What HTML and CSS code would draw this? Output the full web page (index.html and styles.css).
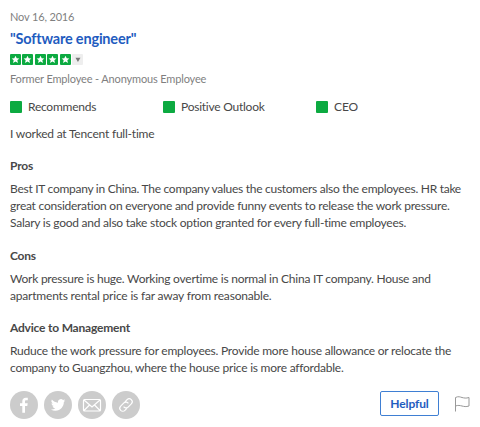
FILE: index.html
```html
<!DOCTYPE html>
<html lang="en">
<head>
<meta charset="utf-8">
<title>Software engineer review</title>
<link rel="stylesheet" href="styles.css">
</head>
<body>
<svg class="defs" aria-hidden="true"><symbol id="star" viewBox="0 0 12 12"><path fill="#fff" d="M6 1.8 7.3 4.6 10.2 4.9 8 6.9 8.7 9.8 6 8.3 3.3 9.8 4 6.9 1.8 4.9 4.7 4.6Z"/></symbol></svg>
<article class="review">
  <time class="date">Nov 16, 2016</time>
  <h2 class="title">"Software engineer"</h2>
  <div class="rating">
    <svg class="star"><use href="#star"/></svg>
    <svg class="star"><use href="#star"/></svg>
    <svg class="star"><use href="#star"/></svg>
    <svg class="star"><use href="#star"/></svg>
    <svg class="star"><use href="#star"/></svg>
    <svg class="more" viewBox="0 0 12 12"><path fill="#777" d="M3.800 4h5.400L6.500 8.600Z"/></svg>
  </div>
  <p class="author">Former Employee - Anonymous Employee</p>
  <ul class="outlook">
    <li><i></i><span>Recommends</span></li>
    <li><i></i><span>Positive Outlook</span></li>
    <li><i></i><span class="ceo">CEO</span></li>
  </ul>
  <p class="tenure">I worked at Tencent full-time</p>
  <section>
    <h3>Pros</h3>
    <p><span class="tight">Best IT company in China. The company values the customers also the employees. HR take</span><br>great consideration on everyone and provide funny events to release the work pressure.<br>Salary is good and also take stock option granted for every full-time employees.</p>
  </section>
  <section>
    <h3>Cons</h3>
    <p>Work pressure is huge. Working overtime is normal in China IT company. House and<br><span class="loose">apartments rental price is far away from reasonable.</span></p>
  </section>
  <section class="advice">
    <h3>Advice to Management</h3>
    <p>Ruduce the work pressure for employees. Provide more house allowance or relocate the<br>company to Guangzhou, where the house price is more affordable.</p>
  </section>
  <footer class="actions">
    <svg class="share" viewBox="0 0 28 28"><circle cx="14" cy="14" r="14"/><path class="solid" d="M12.300 21.800V15H10v-2.800h2.300v-2c0-2.300 1.400-3.500 3.500-3.500h2v2.600h-1.400c-1.100 0-1.400.5-1.400 1.300v1.600h2.700l-.4 2.800H15v6.800Z"/></svg>
    <svg class="share" viewBox="0 0 28 28"><circle cx="14" cy="14" r="14"/><path class="solid" transform="translate(6.900 6.700) scale(.6)" d="M23.950 4.570a10 10 0 0 1-2.820.770 4.960 4.960 0 0 0 2.160-2.720c-.950.550-2 .950-3.130 1.180a4.920 4.920 0 0 0-8.380 4.480C7.690 8.100 4.070 6.130 1.640 3.160a4.930 4.930 0 0 0 1.520 6.570 4.900 4.900 0 0 1-2.230-.610v.060a4.920 4.920 0 0 0 3.950 4.830 5 5 0 0 1-2.210.080 4.940 4.940 0 0 0 4.600 3.420A9.870 9.870 0 0 1 0 19.540a14 14 0 0 0 7.550 2.210c9.050 0 14-7.500 14-13.980 0-.210 0-.420-.020-.630a10 10 0 0 0 2.420-2.570Z"/></svg>
    <svg class="share" viewBox="0 0 28 28"><circle cx="14" cy="14" r="14"/><path class="line" d="M6.500 8.500h15a1 1 0 0 1 1 1v9.500a1 1 0 0 1-1 1h-15a1 1 0 0 1-1-1V9.500a1 1 0 0 1 1-1ZM6 9l8 7 8-7M6 19.500l5.500-5.500M22 19.500 16.500 14"/></svg>
    <svg class="share" viewBox="0 0 28 28"><circle cx="14" cy="14" r="14"/><g transform="rotate(-45 14 14)"><path class="line" d="M12.500 17H9.500a3 3 0 0 1 0-6h4.500a3 3 0 0 1 2.900 3.500M15.500 11h3a3 3 0 0 1 0 6H14a3 3 0 0 1-2.900-3.500"/></g></svg>
    <button class="helpful">Helpful</button>
    <svg class="flag" viewBox="0 0 16 16"><path d="M1.500 15.500V1.500c3-1.500 4.500-.5 6.500 0s4 1 7 0v8.500c-3 1-5 .5-7 0s-4-1-6.500 0"/></svg>
  </footer>
</article>
</body>
</html>
```
FILE: styles.css
```css
* { box-sizing: border-box; margin: 0; padding: 0; }
body { width: 480px; height: 427px; overflow: hidden; background: #fff; color: #484848; font: 12px/17px Lato, sans-serif; letter-spacing: -.24px; }
.defs { position: absolute; width: 0; height: 0; }
.review { display: flex; flex-direction: column; padding: 8px 10px; }
.date { height: 17px; font-size: 11px; letter-spacing: -.15px; color: #7f7f7f; }
.title { margin-top: 3px; height: 22px; font-size: 14.5px; line-height: 21px; letter-spacing: -.19px; color: #1f5cc0; }
.rating { display: flex; gap: 1.400px; margin-top: 4px; height: 11px; }
.star, .more { width: 11px; height: 11px; border-radius: 1px; background: #0caa41; }
.more { background: #eee; }
.author { margin-top: 5px; height: 17px; font-size: 11px; letter-spacing: -.15px; color: #7f7f7f; }
.outlook { display: flex; margin-top: 11px; height: 17px; list-style: none; }
.outlook li { display: flex; align-items: center; gap: 6px; width: 153px; }
.outlook i { width: 12px; height: 12px; border-radius: 1px; background: #0caa41; }
.outlook .ceo { letter-spacing: -.1px; }
.tenure { margin-top: 10px; letter-spacing: -.21px; }
section { margin-top: 16px; white-space: nowrap; }
.tenure + section, .advice { margin-top: 15px; }
.tight { letter-spacing: -.275px; }
.loose { letter-spacing: -.19px; }
.advice p { letter-spacing: -.23px; }
h3 { margin-bottom: 6px; font-size: 12px; line-height: 17px; letter-spacing: -.2px; }
.actions { display: flex; align-items: center; margin-top: 15px; height: 28px; }
.share { width: 28px; height: 28px; margin-right: 6px; fill: #ccc; }
.solid { fill: #fff; }
.line { fill: none; stroke: #fff; stroke-width: 1.200; }
.helpful { margin: -3px 0 0 auto; width: 59px; height: 25px; border: 1px solid #3f7fd3; border-radius: 2px; background: #fff; color: #1f5cc0; font: bold 12px/17px Lato, sans-serif; letter-spacing: -.1px; }
.flag { width: 16px; height: 16px; margin: -3px 0 0 15px; fill: none; stroke: #999; stroke-width: 1; }
```
